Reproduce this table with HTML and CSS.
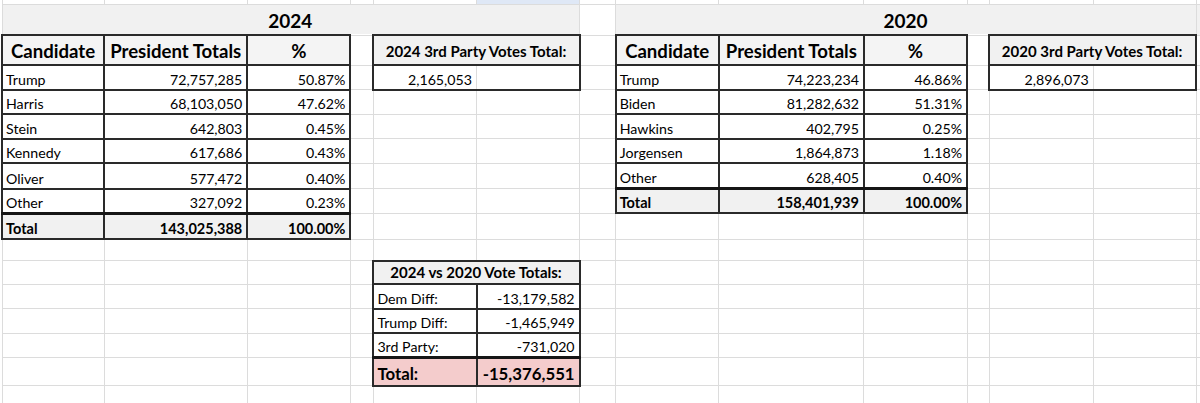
FILE: index.html
```html
<!DOCTYPE html>
<html lang="en">
<head>
<meta charset="utf-8">
<title>2024 vs 2020 Vote Totals</title>
<link rel="stylesheet" href="styles.css">
</head>
<body>
<table class="sheet">
  <colgroup>
    <col class="c-a"><col class="c-b"><col class="c-c"><col class="c-d"><col class="c-e"><col class="c-f"><col class="c-g">
    <col class="c-h"><col class="c-i"><col class="c-j"><col class="c-k"><col class="c-l"><col class="c-m"><col class="c-n">
  </colgroup>
  <tr class="r-top">
    <td></td><td></td><td></td><td></td><td></td><td class="sel"></td><td></td>
    <td></td><td></td><td></td><td></td><td></td><td></td><td></td>
  </tr>
  <tr class="r-band">
    <td colspan="6" class="band year">2024</td>
    <td></td>
    <td colspan="6" class="band year">2020</td>
    <td class="band"></td>
  </tr>
  <tr class="r-head">
    <td class="t hd">Candidate</td>
    <td class="t hd">President Totals</td>
    <td class="t hd">%</td>
    <td></td>
    <td colspan="2" class="t bx">2024 3rd Party Votes Total:</td>
    <td></td>
    <td class="t hd">Candidate</td>
    <td class="t hd">President Totals</td>
    <td class="t hd">%</td>
    <td></td>
    <td colspan="2" class="t bx">2020 3rd Party Votes Total:</td>
    <td></td>
  </tr>
  <tr class="r-row">
    <td class="t">Trump</td><td class="t num">72,757,285</td><td class="t num">50.87%</td>
    <td></td>
    <td class="num bl bb">2,165,053</td><td class="br bb"></td>
    <td></td>
    <td class="t">Trump</td><td class="t num">74,223,234</td><td class="t num">46.86%</td>
    <td></td>
    <td class="num bl bb">2,896,073</td><td class="br bb"></td>
    <td></td>
  </tr>
  <tr class="r-row">
    <td class="t">Harris</td><td class="t num">68,103,050</td><td class="t num">47.62%</td>
    <td></td><td></td><td></td><td></td>
    <td class="t">Biden</td><td class="t num">81,282,632</td><td class="t num">51.31%</td>
    <td></td><td></td><td></td><td></td>
  </tr>
  <tr class="r-row">
    <td class="t">Stein</td><td class="t num">642,803</td><td class="t num">0.45%</td>
    <td></td><td></td><td></td><td></td>
    <td class="t">Hawkins</td><td class="t num">402,795</td><td class="t num">0.25%</td>
    <td></td><td></td><td></td><td></td>
  </tr>
  <tr class="r-row">
    <td class="t">Kennedy</td><td class="t num">617,686</td><td class="t num">0.43%</td>
    <td></td><td></td><td></td><td></td>
    <td class="t">Jorgensen</td><td class="t num">1,864,873</td><td class="t num">1.18%</td>
    <td></td><td></td><td></td><td></td>
  </tr>
  <tr class="r-row r-tall">
    <td class="t">Oliver</td><td class="t num">577,472</td><td class="t num">0.40%</td>
    <td></td><td></td><td></td><td></td>
    <td class="t">Other</td><td class="t num">628,405</td><td class="t num">0.40%</td>
    <td></td><td></td><td></td><td></td>
  </tr>
  <tr class="r-row">
    <td class="t">Other</td><td class="t num">327,092</td><td class="t num">0.23%</td>
    <td></td><td></td><td></td><td></td>
    <td class="t tot thick">Total</td><td class="t tot num thick">158,401,939</td><td class="t tot num thick">100.00%</td>
    <td></td><td></td><td></td><td></td>
  </tr>
  <tr class="r-total">
    <td class="t tot thick">Total</td><td class="t tot num thick">143,025,388</td><td class="t tot num thick">100.00%</td>
    <td></td><td></td><td></td><td></td>
    <td></td><td></td><td></td><td></td><td></td><td></td><td></td>
  </tr>
  <tr class="r-gap">
    <td></td><td></td><td></td><td></td><td></td><td></td><td></td>
    <td></td><td></td><td></td><td></td><td></td><td></td><td></td>
  </tr>
  <tr class="r-vs">
    <td></td><td></td><td></td><td></td>
    <td colspan="2" class="t bx">2024 vs 2020 Vote Totals:</td>
    <td></td><td></td><td></td><td></td><td></td><td></td><td></td><td></td>
  </tr>
  <tr class="r-row">
    <td></td><td></td><td></td><td></td>
    <td class="t">Dem Diff:</td><td class="t num">-13,179,582</td>
    <td></td><td></td><td></td><td></td><td></td><td></td><td></td><td></td>
  </tr>
  <tr class="r-row">
    <td></td><td></td><td></td><td></td>
    <td class="t">Trump Diff:</td><td class="t num">-1,465,949</td>
    <td></td><td></td><td></td><td></td><td></td><td></td><td></td><td></td>
  </tr>
  <tr class="r-row">
    <td></td><td></td><td></td><td></td>
    <td class="t">3rd Party:</td><td class="t num">-731,020</td>
    <td></td><td></td><td></td><td></td><td></td><td></td><td></td><td></td>
  </tr>
  <tr class="r-grand">
    <td></td><td></td><td></td><td></td>
    <td class="t grand thick">Total:</td><td class="t grand num thick">-15,376,551</td>
    <td></td><td></td><td></td><td></td><td></td><td></td><td></td><td></td>
  </tr>
  <tr class="r-row">
    <td></td><td></td><td></td><td></td><td></td><td></td><td></td>
    <td></td><td></td><td></td><td></td><td></td><td></td><td></td>
  </tr>
</table>
</body>
</html>
```

FILE: styles.css
```css
html, body {
  margin: 0;
  padding: 0;
  background: #ffffff;
  overflow: hidden;
}

.sheet {
  border-collapse: collapse;
  table-layout: fixed;
  margin-left: 1px;
  width: 1256px;
  font-family: Lato, "Liberation Sans", sans-serif;
  color: #000000;
}

.c-a { width: 102px; }
.c-b { width: 143px; }
.c-c { width: 103px; }
.c-d { width: 23px; }
.c-e { width: 103px; }
.c-f { width: 103px; }
.c-g { width: 36px; }
.c-h { width: 103px; }
.c-i { width: 145px; }
.c-j { width: 103px; }
.c-k { width: 22px; }
.c-l { width: 104px; }
.c-m { width: 103px; }
.c-n { width: 60px; }

.sheet td {
  box-sizing: border-box;
  border: 1px solid #dcdcdc;
  padding: 0 4px 1px 3px;
  vertical-align: bottom;
  font-size: 14.2px;
  line-height: 17px;
  white-space: nowrap;
  overflow: hidden;
}

/* row heights */
.r-top td { height: 4px; padding: 0; font-size: 0; line-height: 0; border-top: none; }
.r-band td { height: 31px; }
.r-head td { height: 30px; }
.r-row td { height: 24.5px; }
.r-tall td { height: 25.5px; }
.r-total td { height: 26px; }
.r-gap td { height: 21.5px; }
.r-vs td { height: 23.5px; }
.r-grand td { height: 28px; }

.sheet td.sel { background: #dfe8f6; }

.sheet td.band {
  background: #f1f1f1;
}
.sheet td.year {
  text-align: center;
  font-weight: 700;
  font-size: 19px;
  line-height: 22px;
  padding-bottom: 2px;
}

/* bordered table cells */
.sheet td.t { border: 2px solid #2a2a2a; }
.sheet td.thick { border-top: 3px solid #161616; }
.sheet td.bl { border-left: 2px solid #2a2a2a; }
.sheet td.br { border-right: 2px solid #2a2a2a; }
.sheet td.bb { border-bottom: 2px solid #2a2a2a; }

.sheet td.num { text-align: right; }

.sheet td.hd {
  background: #f4f4f4;
  text-align: center;
  font-weight: 700;
  font-size: 18.6px;
  line-height: 22px;
  padding: 0 2px 2px 2px;
}

.sheet td.bx {
  background: #f1f1f1;
  text-align: center;
  font-weight: 700;
  font-size: 15px;
  line-height: 17px;
  padding-bottom: 4px;
}
.r-vs td.bx { padding-bottom: 2px; }

.sheet td.tot {
  background: #f1f1f1;
  font-weight: 700;
  font-size: 14.5px;
}

.sheet td.grand {
  background: #f4cccc;
  font-weight: 700;
  font-size: 16.8px;
  line-height: 20px;
  padding-bottom: 1px;
}
```
